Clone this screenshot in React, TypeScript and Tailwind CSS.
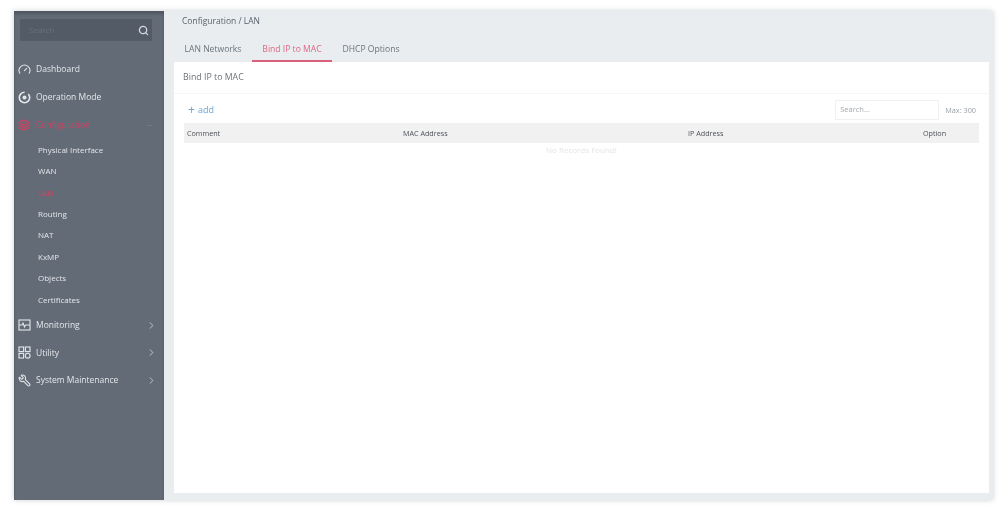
import { FC, ReactNode } from "react";
import { ChevronRight, Gauge, Layers, Wrench, Search, Minus } from "lucide-react";

const subItems = ["Physical Interface", "WAN", "LAN", "Routing", "NAT", "KxMP", "Objects", "Certificates"];

const ModeIcon = () => (
  <svg width="13" height="13" viewBox="0 0 13 13" fill="none" stroke="currentColor">
    <circle cx="6.5" cy="6.5" r="5.2" strokeWidth="1.6" strokeDasharray="24 4" />
    <circle cx="6.5" cy="6.5" r="2" fill="currentColor" stroke="none" />
  </svg>
);

const MonitorIcon = () => (
  <svg width="13" height="12" viewBox="0 0 13 12" fill="none" stroke="currentColor" strokeWidth="1.1">
    <rect x="1" y="1" width="11" height="10" />
    <path d="M1 6h3l1-2 1.5 4 1-2h4.5" />
  </svg>
);

const UtilityIcon = () => (
  <svg width="13" height="13" viewBox="0 0 13 13" fill="none" stroke="currentColor" strokeWidth="1.1">
    <rect x="1" y="1" width="4.6" height="4.6" />
    <rect x="7.4" y="1" width="4.6" height="4.6" />
    <rect x="1" y="7.4" width="4.6" height="4.6" />
    <circle cx="9.7" cy="9.7" r="2.4" />
  </svg>
);

const MenuItem: FC<{ icon: ReactNode; label: string; arrow?: boolean; className?: string }> = ({
  icon,
  label,
  arrow,
  className = "text-[#e4e7ea]",
}) => (
  <div className={`flex items-center h-[27.6px] pl-[4px] pr-[7px] text-[8.5px] ${className}`}>
    <span className="w-[18px] flex justify-start">{icon}</span>
    <span className="flex-1">{label}</span>
    {arrow && <ChevronRight size={11} strokeWidth={1.5} />}
  </div>
);

const App: FC = () => {
  return (
    <div className="w-[1000px] h-[511px] overflow-hidden bg-white pt-[11px] pl-[14px] font-['Open_Sans',sans-serif] blur-[0.55px]">
      <div className="flex w-[979px] h-[489px] shadow-[0_0_5px_rgba(90,100,110,0.3)]">
        <aside className="w-[150px] shrink-0 bg-[#636b77] pt-[8px] shadow-[inset_0_3px_3px_rgba(60,65,75,0.45)]">
          <div className="ml-[6px] mr-[12px] h-[22px] rounded-[1px] bg-[#535b66] flex items-center justify-between pl-[9px] pr-[3px]">
            <span className="text-[8px] text-[#69717c]">Search</span>
            <Search size={11} strokeWidth={2.8} className="text-[#d5d9dd]" />
          </div>
          <div className="mt-[15px]">
            <MenuItem icon={<Gauge size={13} strokeWidth={1.9} />} label="Dashboard" />
            <MenuItem icon={<ModeIcon />} label="Operation Mode" />
            <div className="relative">
              <MenuItem
                icon={<Layers size={12} strokeWidth={2.4} />}
                label="Configuration"
                className="text-[#d6405f]"
              />
              <Minus size={7} className="absolute right-[11px] top-[11px] text-[#7d8590]" />
            </div>
            <div className="mt-[0.4px] mb-[1.2px] pl-[24px]">
              {subItems.map((item) => (
                <div
                  key={item}
                  className={`h-[21.4px] flex items-center text-[8px] ${
                    item === "LAN" ? "text-[#d6405f]" : "text-[#e4e7ea]"
                  }`}
                >
                  {item}
                </div>
              ))}
            </div>
            <MenuItem icon={<MonitorIcon />} label="Monitoring" arrow />
            <MenuItem icon={<UtilityIcon />} label="Utility" arrow />
            <MenuItem icon={<Wrench size={13} strokeWidth={2} className="-scale-x-100" />} label="System Maintenance" arrow />
          </div>
        </aside>
        <main className="flex-1 flex flex-col bg-[#e9edf0] pl-[10px] pr-[4px] pb-[7px]">
          <div className="h-[51px] relative shrink-0">
            <div className="pt-[4px] pl-[8px] text-[8.5px] leading-[12px] text-[#5a636c]">Configuration / LAN</div>
            <div className="flex absolute bottom-0 left-0 text-[8.6px] text-[#6b747c]">
              <div className="w-[78px] h-[24px] flex items-start justify-center pt-[5px]">LAN Networks</div>
              <div className="w-[80px] h-[24px] flex items-start justify-center pt-[5px] text-[#e0677f] border-b-2 border-[#d9607a]">
                Bind IP to MAC
              </div>
              <div className="w-[78px] h-[24px] flex items-start justify-center pt-[5px]">DHCP Options</div>
            </div>
          </div>
          <section className="flex-1 bg-white flex flex-col">
            <div className="h-[32px] shrink-0 border-b border-[#f5f6f7] flex items-center pl-[9px] pt-[1px] text-[8.8px] text-[#6b747c]">
              Bind IP to MAC
            </div>
            <div className="flex items-center justify-between h-[29px] pt-[3px] pl-[14px] pr-[13px] shrink-0">
              <div className="text-[#6aa6da] text-[9px] flex items-center gap-[3px]">
                <span className="text-[12px] leading-none">+</span>
                <span>add</span>
              </div>
              <div className="flex items-center gap-[6px]">
                <div className="w-[104px] h-[20px] border border-[#f0f1f2] flex items-center pl-[4px] text-[7.5px] text-[#a4a9ae]">
                  Search...
                </div>
                <span className="text-[7.3px] text-[#9a9fa5]">Max: 300</span>
              </div>
            </div>
            <div className="mx-[10px] h-[20px] bg-[#f1f1f1] grid grid-cols-[216px_285px_235px_1fr] items-center pl-[3px] text-[7.2px] font-medium text-[#4c5056] shrink-0">
              <span>Comment</span>
              <span>MAC Address</span>
              <span>IP Address</span>
              <span>Option</span>
            </div>
            <div className="text-center text-[8px] text-[#e3e5e7] pt-[1px]">No Records Found!</div>
          </section>
        </main>
      </div>
    </div>
  );
};

export default App;
